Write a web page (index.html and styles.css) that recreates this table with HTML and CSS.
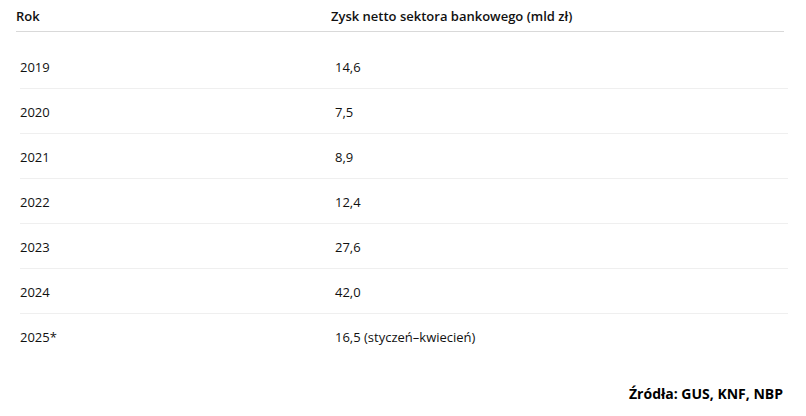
FILE: index.html
```html
<!DOCTYPE html>
<html lang="pl">
<head>
<meta charset="utf-8">
<link rel="stylesheet" href="styles.css">
</head>
<body>
<div class="page">
  <div class="head">
    <div class="c1">Rok</div>
    <div class="c2">Zysk netto sektora bankowego (mld zł)</div>
  </div>
  <div class="body">
    <div class="row"><div class="c1">2019</div><div class="c2">14,6</div></div>
    <div class="row"><div class="c1">2020</div><div class="c2">7,5</div></div>
    <div class="row"><div class="c1">2021</div><div class="c2">8,9</div></div>
    <div class="row"><div class="c1">2022</div><div class="c2">12,4</div></div>
    <div class="row"><div class="c1">2023</div><div class="c2">27,6</div></div>
    <div class="row"><div class="c1">2024</div><div class="c2">42,0</div></div>
    <div class="row last"><div class="c1">2025*</div><div class="c2">16,5 (styczeń–kwiecień)</div></div>
  </div>
  <div class="source">Źródła: GUS, KNF, NBP</div>
</div>
</body>
</html>
```
FILE: styles.css
```css
html, body { margin: 0; padding: 0; background: #fff; }
body {
  font-family: "Open Sans", "Noto Sans", sans-serif;
  font-size: 13px;
  color: #111;
}
.page { width: 806px; height: 416px; }
.head {
  display: grid;
  grid-template-columns: 315px 1fr;
  margin-left: 16px;
  width: 768px;
  padding-top: 6px;
  padding-bottom: 5px;
  border-bottom: 1px solid #d9d9d9;
  font-weight: 600;
  line-height: 20px;
}
.body {
  margin-left: 20px;
  width: 768px;
  margin-top: 12px;
}
.row {
  display: grid;
  grid-template-columns: 315px 1fr;
  line-height: 20px;
  padding-top: 13px;
  padding-bottom: 11px;
  border-bottom: 1px solid #efefef;
}
.row.last { border-bottom: none; }
.source {
  width: 783px;
  text-align: right;
  margin-top: 26px;
  font-weight: 700;
  font-size: 14px;
  line-height: 20px;
  color: #000;
}
```
